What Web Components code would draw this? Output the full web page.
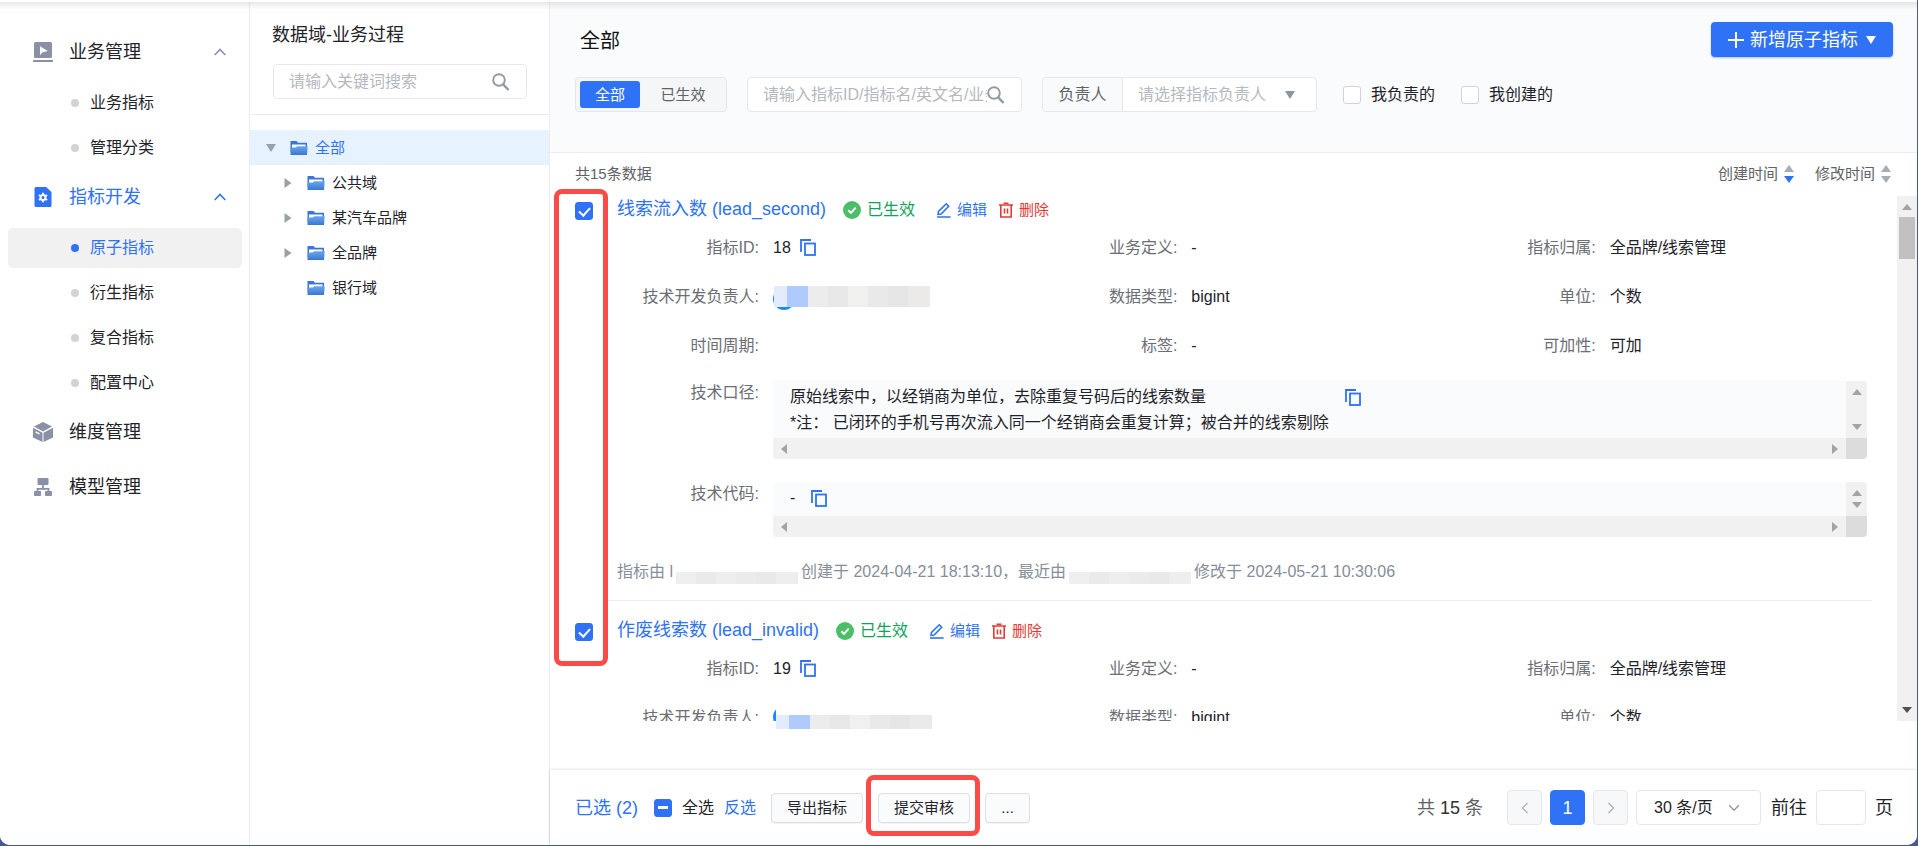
<!DOCTYPE html>
<html lang="zh-CN">
<head>
<meta charset="utf-8">
<meta name="viewport" content="width=device-width, initial-scale=1">
<title>原子指标</title>
<style>
  html, body { margin: 0; height: 100%; }
  body {
    background: #42599a;
    color: #1f2329;
    font-family: "Liberation Sans", "Noto Sans CJK SC", sans-serif;
    font-size: 16px;
    line-height: 24px;
    --primary: #2f72f5;
    --line: #e4e7ec;
    --muted: #606266;
  }
</style>
</head>
<body>
<metric-app></metric-app>

<script>
/* Registers an element whose shadow root is cloned from the given markup. */
function define(name, markup, setup) {
  const template = document.createElement('template');
  template.innerHTML = '<style>*{box-sizing:border-box}button,input,select{font:inherit;color:inherit;margin:0}a{color:inherit;text-decoration:none}</style>' + markup;
  customElements.define(name, class extends HTMLElement {
    connectedCallback() {
      if (this.shadowRoot) return;
      const root = this.attachShadow({ mode: 'open' });
      root.append(template.content.cloneNode(true));
      if (setup) setup(this, root);
    }
  });
}

/* ---------- icons ---------- */
const ICONS = {
  business: '<svg width="20" height="20" viewBox="0 0 20 20"><rect x="1" width="18" height="16" rx="1.5" fill="#8a90a6"/><rect y="18" width="20" height="2" rx=".6" fill="#8a90a6"/><path d="M7 4.200v9l2.200-2.600 5.600-1.700z" fill="#fff"/></svg>',
  develop: '<svg width="20" height="20" viewBox="0 0 20 20"><path d="M3 0h10l5.500 5v13.500a1.500 1.500 0 0 1-1.500 1.500H3A1.500 1.500 0 0 1 1.500 18.500v-17A1.500 1.500 0 0 1 3 0z" fill="#2f72f5"/><circle cx="10" cy="10.500" r="2.500" fill="none" stroke="#fff" stroke-width="2"/><path d="M10 5.800v2M10 13.200v2M5.900 8.100l1.800 1.100M12.300 11.800l1.800 1.100M5.900 12.900l1.800-1.100M12.300 9.200l1.800-1.100" stroke="#fff" stroke-width="1.800"/></svg>',
  cube: '<svg width="20" height="20" viewBox="0 0 20 20"><path d="M10 0l9 4.600-9 4.800-9-4.800z" fill="#8a90a6"/><path d="M0 5.800l9.500 5V20L0 15.400zM20 5.800l-9.500 5V20l9.500-4.600z" fill="#8a90a6"/><path d="M2.500 9.800l4 2.100" stroke="#fff" stroke-width="1.300"/></svg>',
  model: '<svg width="20" height="20" viewBox="0 0 20 20"><rect x="4.500" y="1" width="11" height="7" rx="1" fill="#8a90a6"/><path d="M10 8v4M4.500 15v-3.200h11V15" fill="none" stroke="#8a90a6" stroke-width="1.800"/><rect x="1" y="14" width="7" height="5" rx=".8" fill="#8a90a6"/><rect x="12" y="14" width="7" height="5" rx=".8" fill="#8a90a6"/></svg>',
  chevron: '<svg width="12" height="8" viewBox="0 0 12 8"><path d="M.7 7L6 1.400 11.300 7" fill="none" stroke="currentColor" stroke-width="1.500"/></svg>',
  down: '<svg width="12" height="8" viewBox="0 0 12 8"><path d="M1.200 1.200L6 6.200l4.800-5" fill="none" stroke="#8f959e" stroke-width="1.300"/></svg>',
  prev: '<svg width="8" height="14" viewBox="0 0 8 14"><path d="M6.500 2L1.500 7l5 5" fill="none" stroke="#a8abb2" stroke-width="1.200"/></svg>',
  next: '<svg width="8" height="14" viewBox="0 0 8 14"><path d="M1.500 2l5 5-5 5" fill="none" stroke="#a8abb2" stroke-width="1.200"/></svg>',
  search: '<svg width="18" height="18" viewBox="0 0 18 18"><circle cx="7" cy="7" r="5.800" fill="none" stroke="#919aa3" stroke-width="1.900"/><path d="M11.200 11.400l5.400 5.600" stroke="#919aa3" stroke-width="2.400"/></svg>',
  folder: '<svg width="18" height="16" viewBox="0 0 18 16"><defs><linearGradient id="g" x2="0" y2="1"><stop stop-color="#6aa6ee"/><stop offset="1" stop-color="#3a78d0"/></linearGradient></defs><path d="M.5 15V1h6l1.500 1.800h9V12H.5z" fill="#3b74dc"/><path d="M2 4.400h13.500V8H2z" fill="#fff"/><path d="M.5 15V7.600h5.200l1.600-1.400h10.400L17 15z" fill="url(#g)"/></svg>',
  plus: '<svg width="16" height="16" viewBox="0 0 16 16"><path d="M8 0v16M0 8h16" stroke="#fff" stroke-width="2"/></svg>',
  caret: '<svg width="10" height="8" viewBox="0 0 10 8"><path d="M0 0h10L5 8z" fill="currentColor"/></svg>',
  right: '<svg width="10" height="12" viewBox="0 0 10 12"><path d="M1.500 1l7 5-7 5z" fill="#9aa0a8"/></svg>',
  ok: '<svg width="18" height="18" viewBox="0 0 18 18"><circle cx="9" cy="9" r="9" fill="#4cbd68"/><path d="M5.300 9.200l2.700 2.700 4.700-5.200" fill="none" stroke="#fff" stroke-width="2"/></svg>',
  edit: '<svg width="16" height="16" viewBox="0 0 16 16"><path d="M1 15h13.600" stroke="#2f72f5" stroke-width="1.600"/><path d="M2 12.400l.5-3 7.800-7.600 2.400 2.400-7.600 7.800z" fill="none" stroke="#2f72f5" stroke-width="1.600"/></svg>',
  trash: '<svg width="16" height="16" viewBox="0 0 16 16"><path d="M1 3h14M5.500 1.300h5M2.800 3v12h10.400V3M6.500 6.500v5M9.500 6.500v5" fill="none" stroke="#e43a33" stroke-width="1.600"/></svg>',
  copy: '<svg width="16" height="17" viewBox="0 0 16 17"><path d="M1 13V1h10" fill="none" stroke="#2f72f5" stroke-width="1.800"/><rect x="5" y="4.500" width="10" height="11.500" fill="none" stroke="#2f72f5" stroke-width="1.800"/></svg>',
  sort: '<svg width="10" height="18" viewBox="0 0 10 18"><path d="M5 0l5 7H0z" fill="#a6acb8"/><path d="M0 11h10l-5 7z" fill="currentColor"/></svg>'
};
define('ui-icon', '<style>:host{display:inline-flex;flex:none}svg{display:block}</style>', (el, root) => {
  root.append(document.createRange().createContextualFragment(ICONS[el.getAttribute('name')]));
});

/* ---------- small controls ---------- */
define('ui-check', `
<style>
  :host { display: inline-flex; }
  label { display: flex; align-items: center; gap: 10px; }
  input { appearance: none; width: 18px; height: 18px; border: 1px solid #d0d3d9; border-radius: 3px; background: #fff; display: grid; place-items: center; }
  input:checked, input:indeterminate { background: var(--primary); border-color: var(--primary); }
  input:checked::after { content: ""; width: 5px; height: 9px; border: solid #fff; border-width: 0 2px 2px 0; transform: translateY(-1px) rotate(42deg); }
  input:indeterminate::after { content: ""; width: 10px; height: 3px; background: #fff; }
</style>
<label><input type="checkbox"><slot></slot></label>`, (el, root) => {
  const box = root.querySelector('input');
  box.checked = el.hasAttribute('checked');
  box.indeterminate = el.hasAttribute('mixed');
  if (el.hasAttribute('label')) box.setAttribute('aria-label', el.getAttribute('label'));
});

define('ui-search', `
<style>
  :host { display: block; }
  label { display: flex; align-items: center; height: 35px; border: 1px solid var(--line); border-radius: 4px; background: #fff; padding: 0 16px 0 15px; }
  input { flex: 1; min-width: 0; border: 0; outline: 0; padding: 0; background: none; }
  input::placeholder { color: #b4b8bf; opacity: 1; }
</style>
<label><input type="text"><ui-icon name="search"></ui-icon></label>`, (el, root) => {
  const box = root.querySelector('input');
  box.placeholder = el.getAttribute('hint');
  box.setAttribute('aria-label', el.getAttribute('hint'));
});

define('ui-scrollbar', `
<style>
  :host { display: flex; flex-direction: column; justify-content: space-between; align-items: center; width: 20px; background: #f1f1f1; color: #a3a3a3; padding: 8px 0; }
  :host([across]) { flex-direction: row; width: auto; height: 21px; padding: 0 8px; }
  i { width: 0; height: 0; border: 5px solid transparent; }
  .a { border-top-width: 0; border-bottom: 6px solid currentColor; }
  .b { border-bottom-width: 0; border-top: 6px solid currentColor; }
  :host([across]) .a { border: 5px solid transparent; border-left-width: 0; border-right: 6px solid currentColor; }
  :host([across]) .b { border: 5px solid transparent; border-right-width: 0; border-left: 6px solid currentColor; }
  .thumb { display: none; width: 16px; height: 42px; background: #c1c1c1; margin: 7px 0 auto; }
  :host([thumb]) .thumb { display: block; }
  :host([thumb]) .b { border-top-color: #505050; }
</style>
<i class="a"></i><span class="thumb"></span><i class="b"></i>`);

define('ui-mosaic', `
<style>
  :host { display: block; flex: none; width: 122px; height: 12px; background: linear-gradient(90deg,#eeeff0 0 20px,#e9eaec 0 40px,#eeeeef 0 60px,#eaebec 0 80px,#e8e9eb 0 100px,#eeeeef 0); }
  :host([person]) { width: 156px; height: 21px; background: linear-gradient(90deg,#e3ecfe 0 13px,#afcbfc 0 34px,#ececec 0 54px,#e7e7e7 0 74px,#f0f0ee 0 94px,#e9e9e9 0 114px,#e6e6e6 0 134px,#ebeae8 0); }
</style>`);

/* ---------- side navigation ---------- */
define('nav-link', `
<style>
  :host { display: block; }
  a { display: flex; align-items: center; gap: 11px; height: 40px; padding-left: 63px; border-radius: 5px; }
  a::before { content: ""; width: 8px; height: 8px; border-radius: 50%; background: #d0d3d8; }
  :host([active]) a { background: #f1f1f2; color: var(--primary); }
  :host([active]) a::before { background: var(--primary); }
</style>
<a href="#"><slot></slot></a>`);

define('nav-group', `
<style>
  :host { display: block; }
  button { display: flex; align-items: center; width: 100%; height: 55px; padding: 0 16px 0 25px; border: 0; background: none; font-size: 18px; text-align: left; }
  .t { flex: 1; margin-left: 16px; }
  .chev { color: #8a90a6; }
  :host([active]) button, :host([active]) .chev { color: var(--primary); }
  :host([leaf]) .chev { display: none; }
  .list { display: flex; flex-direction: column; gap: 5px; padding: 4px 0 1px; }
  :host([leaf]) .list { display: none; }
</style>
<button type="button"><span class="t"></span><ui-icon class="chev" name="chevron"></ui-icon></button>
<div class="list"><slot></slot></div>`, (el, root) => {
  const icon = document.createElement('ui-icon');
  icon.setAttribute('name', el.getAttribute('icon'));
  root.querySelector('button').prepend(icon);
  root.querySelector('.t').textContent = el.getAttribute('label');
});

define('app-sidebar', `
<style>:host { display: block; width: 250px; flex: none; border-right: 1px solid #ececef; background: #fff; padding: 22px 7px 0 8px; }</style>
<nav>
  <nav-group icon="business" label="业务管理">
    <nav-link>业务指标</nav-link><nav-link>管理分类</nav-link>
  </nav-group>
  <nav-group icon="develop" label="指标开发" active>
    <nav-link active>原子指标</nav-link><nav-link>衍生指标</nav-link><nav-link>复合指标</nav-link><nav-link>配置中心</nav-link>
  </nav-group>
  <nav-group icon="cube" label="维度管理" leaf></nav-group>
  <nav-group icon="model" label="模型管理" leaf></nav-group>
</nav>`);

/* ---------- domain tree ---------- */
define('tree-row', `
<style>
  :host { display: block; }
  button { display: flex; align-items: center; width: 100%; height: 35px; border: 0; background: none; padding: 0 0 0 33px; font-size: 15px; text-align: left; }
  .arrow { width: 10px; margin-right: 14px; color: #9aa0a8; }
  .arrow .r { display: block; } .arrow .c { display: none; }
  :host([leaf]) .arrow { visibility: hidden; }
  .f { margin-right: 7px; }
  :host([open]) button { padding-left: 16px; background: #e6f3ff; color: var(--primary); }
  :host([open]) .arrow .r { display: none; } :host([open]) .arrow .c { display: block; }
</style>
<button type="button"><span class="arrow"><ui-icon class="r" name="right"></ui-icon><ui-icon class="c" name="caret"></ui-icon></span><ui-icon class="f" name="folder"></ui-icon><slot></slot></button>`);

define('domain-panel', `
<style>
  :host { display: block; width: 300px; flex: none; background: #fff; border-right: 1px solid #ececef; }
  header { padding: 21px 22px 15px; border-bottom: 1px solid #ececef; }
  h2 { margin: 0 0 17px; font-size: 18px; font-weight: 400; line-height: 24px; }
  ui-search { margin-left: 1px; }
  .tree { padding-top: 15px; }
</style>
<header><h2>数据域-业务过程</h2><ui-search hint="请输入关键词搜索"></ui-search></header>
<div class="tree">
  <tree-row open>全部</tree-row><tree-row>公共域</tree-row><tree-row>某汽车品牌</tree-row><tree-row>全品牌</tree-row><tree-row leaf>银行域</tree-row>
</div>`);

/* ---------- page head with filters ---------- */
define('page-head', `
<style>
  :host { display: block; height: 151px; flex: none; background: #fafbfd; border-bottom: 1px solid #ebedf0; padding: 20px 24px 0 25px; }
  .top { display: flex; justify-content: space-between; height: 35px; }
  h1 { margin: 5px 0 0 5px; font-size: 20px; line-height: 28px; font-weight: 400; color: #111; }
  .new { display: flex; align-items: center; height: 35px; padding: 0 17px; border: 0; border-radius: 4px; background: var(--primary); color: #fff; font-size: 18px; white-space: nowrap; box-shadow: 0 1px 2px #2f72f566; }
  .new span { margin: 0 8px 0 6px; }
  .filters { display: flex; align-items: center; gap: 20px; margin-top: 20px; }
  .seg { display: flex; height: 35px; padding: 3px 0 3px 4px; border: 1px solid var(--line); border-radius: 4px; background: #f5f6f8; }
  .seg button { border: 0; background: none; font-size: 15px; color: var(--muted); width: 86px; padding: 0; border-radius: 3px; }
  .seg .on { width: 60px; background: var(--primary); color: #fff; }
  ui-search { width: 275px; }
  .owner { display: flex; width: 275px; height: 35px; border: 1px solid var(--line); border-radius: 4px; background: #fff; align-items: center; padding-right: 21px; color: #8f959e; }
  .owner span { width: 80px; align-self: stretch; line-height: 33px; text-align: center; background: #f9fafb; border-right: 1px solid var(--line); color: var(--muted); border-radius: 4px 0 0 4px; }
  select { appearance: none; flex: 1; border: 0; outline: 0; background: none; padding: 0 0 0 15px; color: #b4b8bf; }
  ui-check { margin-left: 6px; }
</style>
<div class="top"><h1>全部</h1><button type="button" class="new"><ui-icon name="plus"></ui-icon><span>新增原子指标</span><ui-icon name="caret"></ui-icon></button></div>
<div class="filters">
  <div class="seg"><button type="button" class="on">全部</button><button type="button">已生效</button></div>
  <ui-search hint="请输入指标ID/指标名/英文名/业务定义"></ui-search>
  <label class="owner"><span>负责人</span><select><option>请选择指标负责人</option></select><ui-icon name="caret"></ui-icon></label>
  <ui-check>我负责的</ui-check>
  <ui-check>我创建的</ui-check>
</div>`);

/* ---------- metric list ---------- */
define('metric-field', `
<style>
  :host { display: flex; min-width: 0; }
  .k { width: 142px; flex: none; margin-right: 14px; text-align: right; color: #6b6e74; white-space: nowrap; }
  .v { flex: 1; min-width: 0; display: flex; align-items: center; gap: 9px; }
</style>
<span class="k"></span><div class="v"><slot></slot></div>`, (el, root) => {
  root.querySelector('.k').textContent = el.getAttribute('label') + ':';
});

define('code-box', `
<style>
  :host { display: grid; flex: 1; grid-template-columns: 1fr 21px; grid-template-rows: minmax(34px, auto) 21px; background: #fafbfd; border-radius: 4px; overflow: hidden; margin-right: 5px; }
  .text { display: flex; align-items: flex-start; gap: 16px; padding: 3px 17px 2px; line-height: 26px; }
  .text ui-icon { margin-top: 5px; }
  ui-scrollbar { width: 21px; }
  ui-scrollbar[across] { width: auto; }
  .corner { background: #dcdcdc; }
</style>
<div class="text"><div><slot></slot></div><ui-icon name="copy"></ui-icon></div>
<ui-scrollbar></ui-scrollbar>
<ui-scrollbar across></ui-scrollbar><span class="corner"></span>`);

define('metric-card', `
<style>
  :host { display: flex; padding-left: 25px; }
  ui-check { margin: 6px 12px 0 0; align-self: flex-start; }
  .body { flex: 1; min-width: 0; padding-left: 12px; border-bottom: 1px solid #ebedf0; }
  .head { display: flex; align-items: center; height: 27px; }
  h3 { margin: 0 17px 0 0; font-size: 18px; line-height: 27px; font-weight: 400; color: var(--primary); }
  .ok { display: flex; align-items: center; gap: 6px; margin-right: 21px; color: #12a35a; }
  button { display: flex; align-items: center; gap: 5px; border: 0; background: none; padding: 0; margin-right: 11px; font-size: 15px; color: var(--primary); }
  .del { color: #e43a33; }
</style>
<ui-check checked></ui-check>
<div class="body">
  <div class="head"><h3></h3><span class="ok"><ui-icon name="ok"></ui-icon>已生效</span>
    <button type="button"><ui-icon name="edit"></ui-icon>编辑</button><button type="button" class="del"><ui-icon name="trash"></ui-icon>删除</button></div>
  <slot></slot>
</div>`, (el, root) => {
  root.querySelector('h3').textContent = el.getAttribute('name');
  root.querySelector('ui-check').shadowRoot.querySelector('input').setAttribute('aria-label', el.getAttribute('name'));
});

define('metric-list', `
<style>
  :host { display: flex; flex: 1; min-height: 0; }
  .items { flex: 1; min-width: 0; overflow: hidden; padding-right: 25px; display: flex; flex-direction: column; gap: 16px; }
  metric-card { flex: none; }
  .grid { display: grid; grid-template-columns: repeat(3, 1fr); grid-auto-rows: 49px; align-items: center; }
  .codes { display: flex; flex-direction: column; gap: 23px; padding-top: 11px; }
  .meta { display: flex; gap: 3px; height: 24px; margin: 23px 0 16px; color: #868e9a; white-space: nowrap; }
  .meta ui-mosaic { align-self: flex-end; }
  .who { position: relative; display: flex; align-items: center; height: 24px; }
  .who::before { content: ""; position: absolute; left: 0; top: 3px; width: 22px; height: 22px; border-radius: 50%; background: #1e88ff; }
  .who ui-mosaic { position: relative; margin-left: 1px; }
  .late::before { top: 0; }
  .late ui-mosaic { height: 24px; margin-left: 3px; background: #fff; }
</style>
<div class="items">
  <metric-card name="线索流入数 (lead_second)">
    <div class="grid">
      <metric-field label="指标ID">18<ui-icon name="copy"></ui-icon></metric-field>
      <metric-field label="业务定义">-</metric-field>
      <metric-field label="指标归属">全品牌/线索管理</metric-field>
      <metric-field label="技术开发负责人"><span class="who"><ui-mosaic person></ui-mosaic></span></metric-field>
      <metric-field label="数据类型">bigint</metric-field>
      <metric-field label="单位">个数</metric-field>
      <metric-field label="时间周期"></metric-field>
      <metric-field label="标签">-</metric-field>
      <metric-field label="可加性">可加</metric-field>
    </div>
    <div class="codes">
      <metric-field label="技术口径"><code-box>原始线索中，以经销商为单位，去除重复号码后的线索数量<br>*注： 已闭环的手机号再次流入同一个经销商会重复计算；被合并的线索剔除</code-box></metric-field>
      <metric-field label="技术代码"><code-box>-</code-box></metric-field>
    </div>
    <div class="meta"><span>指标由 l</span><ui-mosaic></ui-mosaic><span>创建于 2024-04-21 18:13:10，最近由</span><ui-mosaic></ui-mosaic><span>修改于 2024-05-21 10:30:06</span></div>
  </metric-card>
  <metric-card name="作废线索数 (lead_invalid)">
    <div class="grid">
      <metric-field label="指标ID">19<ui-icon name="copy"></ui-icon></metric-field>
      <metric-field label="业务定义">-</metric-field>
      <metric-field label="指标归属">全品牌/线索管理</metric-field>
      <metric-field label="技术开发负责人"><span class="who late"><ui-mosaic person></ui-mosaic></span></metric-field>
      <metric-field label="数据类型">bigint</metric-field>
      <metric-field label="单位">个数</metric-field>
    </div>
  </metric-card>
</div>
<ui-scrollbar thumb></ui-scrollbar>`);

define('list-head', `
<style>
  :host { display: flex; align-items: center; height: 43px; flex: none; padding: 0 26px 2px 25px; font-size: 15px; color: var(--muted); }
  span { flex: 1; }
  button { display: flex; align-items: center; gap: 6px; margin-left: 21px; border: 0; background: none; padding: 0; color: #a6acb8; }
  b { font-weight: 400; color: var(--muted); }
  .on { color: var(--primary); }
</style>
<span>共15条数据</span>
<button type="button" class="on"><b>创建时间</b><ui-icon name="sort"></ui-icon></button>
<button type="button"><b>修改时间</b><ui-icon name="sort"></ui-icon></button>`);

/* ---------- batch actions and pagination ---------- */
define('batch-bar', `
<style>
  :host { display: flex; align-items: center; height: 75px; flex: none; padding: 0 24px 0 25px; background: #fff; box-shadow: 0 0 3px #00000030; position: relative; white-space: nowrap; }
  .sel { font-size: 18px; color: var(--primary); margin-right: 16px; }
  a { color: var(--primary); margin: 0 15px 0 10px; }
  .btn { height: 30px; min-width: 45px; padding: 0 15px; margin-right: 15px; border: 1px solid #dcdfe6; border-radius: 4px; background: #fafbfd; font-size: 15px; line-height: 28px; box-shadow: 0 1px 1px #0000000d; }
  .mark { position: relative; display: flex; }
  .mark::after { content: ""; position: absolute; inset: -18px 5px -13px -12px; border: 5px solid #f94c48; border-radius: 8px; pointer-events: none; }
  .total { margin-left: auto; margin-right: 24px; font-size: 18px; color: var(--muted); }
  .total b { font-weight: 400; color: #303133; }
  .pg { display: grid; place-items: center; width: 35px; height: 35px; margin-right: 8px; padding: 0; border: 1px solid var(--line); border-radius: 4px; background: #f7f8fa; font-size: 18px; }
  .on { background: var(--primary); border-color: var(--primary); color: #fff; }
  .size { display: flex; align-items: center; width: 125px; height: 35px; padding: 0 20px 0 17px; border: 1px solid var(--line); border-radius: 4px; }
  select { appearance: none; flex: 1; min-width: 0; border: 0; outline: 0; background: none; padding: 0; }
  .jump { display: flex; align-items: center; gap: 9px; margin-left: 10px; font-size: 18px; }
  .jump input { width: 50px; height: 35px; border: 1px solid var(--line); border-radius: 4px; background: #fff; }
</style>
<span class="sel">已选 (2)</span><ui-check mixed>全选</ui-check><a href="#">反选</a>
<button type="button" class="btn">导出指标</button><span class="mark"><button type="button" class="btn">提交审核</button></span><button type="button" class="btn">...</button>
<span class="total">共 <b>15</b> 条</span>
<button type="button" class="pg" aria-label="上一页"><ui-icon name="prev"></ui-icon></button><button type="button" class="pg on">1</button><button type="button" class="pg" aria-label="下一页"><ui-icon name="next"></ui-icon></button>
<label class="size"><select aria-label="每页条数"><option>30 条/页</option></select><ui-icon name="down"></ui-icon></label>
<label class="jump">前往<input type="text">页</label>`);

/* ---------- shell ---------- */
define('metric-app', `
<style>
  :host { display: block; height: 100vh; padding: 0 1px 1px 0; box-sizing: border-box; }
  .win { position: relative; display: flex; height: 100%; padding-top: 2px; background: #fff; border-radius: 0 0 10px 10px; overflow: hidden; }
  .win::before { content: ""; position: absolute; left: 0; right: 0; top: 2px; height: 8px; background: linear-gradient(#00000016, #00000000); z-index: 1; }
  main { position: relative; flex: 1; min-width: 0; display: flex; flex-direction: column; }
  metric-list { margin-bottom: 49px; }
  .ring { position: absolute; left: 4px; top: 187px; width: 54px; height: 477px; border: 5px solid #f94c48; border-radius: 8px; pointer-events: none; }
  .cover { position: absolute; left: 226px; top: 713px; height: 14px; overflow: hidden; }
</style>
<div class="win">
  <app-sidebar></app-sidebar>
  <domain-panel></domain-panel>
  <main>
    <page-head></page-head>
    <list-head></list-head>
    <metric-list></metric-list>
    <batch-bar></batch-bar>
    <div class="ring"></div>
    <div class="cover"><ui-mosaic person></ui-mosaic></div>
  </main>
</div>`);
</script>
</body>
</html>
